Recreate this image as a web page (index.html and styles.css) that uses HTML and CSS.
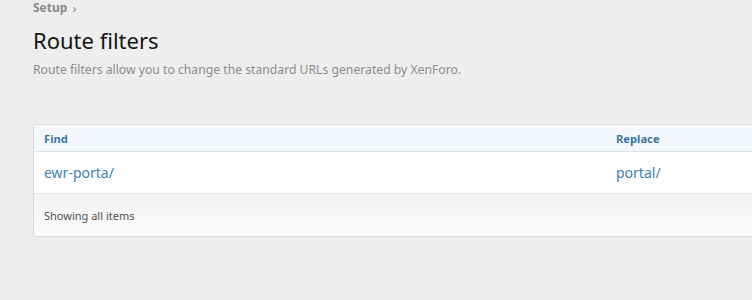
FILE: index.html
```html
<!DOCTYPE html>
<html>
<head>
<meta charset="utf-8">
<link rel="stylesheet" href="styles.css">
</head>
<body>
<div class="page">
  <div class="crumbs"><span class="crumb">Setup</span><span class="sep">›</span></div>
  <h1 class="title">Route filters</h1>
  <p class="desc">Route filters allow you to change the standard URLs generated by XenForo.</p>
  <div class="block">
    <div class="row head">
      <div class="cell">Find</div>
      <div class="cell">Replace</div>
    </div>
    <div class="row item">
      <div class="cell">ewr-porta/</div>
      <div class="cell">portal/</div>
    </div>
    <div class="foot">Showing all items</div>
  </div>
</div>
</body>
</html>
```
FILE: styles.css
```css
html, body {
  margin: 0;
  background: #eeeeee;
  overflow: hidden;
  font-family: "Noto Sans", "Open Sans", sans-serif;
}
.page {
  padding-left: 33px;
  width: 760px;
}
.crumbs {
  height: 14px;
  line-height: 14px;
  padding-top: 1px;
  font-size: 12px;
  color: #8a8a8a;
  display: flex;
  gap: 5px;
}
.crumb { font-weight: 700; }
.sep { font-size: 13px; }
.title {
  margin: 10px 0 0;
  font-size: 22px;
  font-weight: 400;
  line-height: 30px;
  color: #141414;
}
.desc {
  margin: 7px 0 0;
  font-size: 12.2px;
  line-height: 16px;
  color: #8c8c8c;
}
.block {
  margin-top: 46px;
  border: 1px solid #dadada;
  border-radius: 3px;
  background: #fff;
  overflow: hidden;
}
.row {
  display: grid;
  grid-template-columns: 572px 1fr;
}
.cell { padding-left: 10px; }
.head {
  height: 26px;
  align-items: center;
  background: #f4f8fc;
  border-bottom: 1px solid #dfe4ea;
  font-size: 11.2px;
  font-weight: 700;
  color: #3c76a2;
}
.item {
  height: 41px;
  align-items: center;
  font-size: 14px;
  color: #3d7fb2;
  border-bottom: 1px solid #e3e3e3;
}
.foot {
  height: 42px;
  display: flex;
  align-items: center;
  padding-left: 10px;
  font-size: 11px;
  color: #505050;
  background: linear-gradient(#f3f3f3, #fbfbfb);
}
```
